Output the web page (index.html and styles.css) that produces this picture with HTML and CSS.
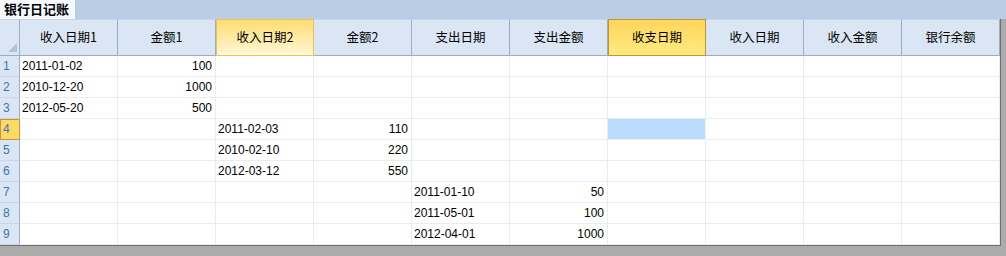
FILE: index.html
```html
<!DOCTYPE html>
<html lang="zh">
<head>
<meta charset="utf-8">
<title>银行日记账</title>
<link rel="stylesheet" href="styles.css">
</head>
<body>
<div class="window">
  <div class="tabstrip"><div class="tab">银行日记账</div></div>
  <div class="sheet">
    <div class="grid">
      <div class="hc corner"><span class="tri"></span></div>
      <div class="hc">收入日期1</div>
      <div class="hc">金额1</div>
      <div class="hc hover">收入日期2</div>
      <div class="hc">金额2</div>
      <div class="hc">支出日期</div>
      <div class="hc">支出金额</div>
      <div class="hc active">收支日期</div>
      <div class="hc">收入日期</div>
      <div class="hc">收入金额</div>
      <div class="hc">银行余额</div>

      <div class="rn">1</div><div class="c">2011-01-02</div><div class="c r">100</div><div class="c"></div><div class="c"></div><div class="c"></div><div class="c"></div><div class="c"></div><div class="c"></div><div class="c"></div><div class="c"></div>
      <div class="rn">2</div><div class="c">2010-12-20</div><div class="c r">1000</div><div class="c"></div><div class="c"></div><div class="c"></div><div class="c"></div><div class="c"></div><div class="c"></div><div class="c"></div><div class="c"></div>
      <div class="rn">3</div><div class="c">2012-05-20</div><div class="c r">500</div><div class="c"></div><div class="c"></div><div class="c"></div><div class="c"></div><div class="c"></div><div class="c"></div><div class="c"></div><div class="c"></div>
      <div class="rn cur">4</div><div class="c"></div><div class="c"></div><div class="c">2011-02-03</div><div class="c r">110</div><div class="c"></div><div class="c"></div><div class="c sel"></div><div class="c"></div><div class="c"></div><div class="c"></div>
      <div class="rn">5</div><div class="c"></div><div class="c"></div><div class="c">2010-02-10</div><div class="c r">220</div><div class="c"></div><div class="c"></div><div class="c"></div><div class="c"></div><div class="c"></div><div class="c"></div>
      <div class="rn">6</div><div class="c"></div><div class="c"></div><div class="c">2012-03-12</div><div class="c r">550</div><div class="c"></div><div class="c"></div><div class="c"></div><div class="c"></div><div class="c"></div><div class="c"></div>
      <div class="rn">7</div><div class="c"></div><div class="c"></div><div class="c"></div><div class="c"></div><div class="c">2011-01-10</div><div class="c r">50</div><div class="c"></div><div class="c"></div><div class="c"></div><div class="c"></div>
      <div class="rn">8</div><div class="c"></div><div class="c"></div><div class="c"></div><div class="c"></div><div class="c">2011-05-01</div><div class="c r">100</div><div class="c"></div><div class="c"></div><div class="c"></div><div class="c"></div>
      <div class="rn">9</div><div class="c"></div><div class="c"></div><div class="c"></div><div class="c"></div><div class="c">2012-04-01</div><div class="c r">1000</div><div class="c"></div><div class="c"></div><div class="c"></div><div class="c"></div>
    </div>
  </div>
</div>
</body>
</html>
```

FILE: styles.css
```css
* { box-sizing: border-box; }
html, body { margin: 0; padding: 0; }
body {
  width: 1006px;
  height: 256px;
  background: #ababab;
  font-family: "Liberation Sans", "Noto Sans CJK SC", sans-serif;
  font-size: 12px;
  color: #000;
  overflow: hidden;
}
.window { width: 1006px; }
.tabstrip {
  height: 19px;
  background: #b9cde5;
  display: flex;
  align-items: stretch;
}
.tab {
  width: 75px;
  background: #f5f8fc;
  font-family: "Noto Sans CJK SC", sans-serif;
  font-weight: bold;
  font-size: 13px;
  line-height: 18px;
  padding-left: 4px;
  white-space: nowrap;
}
.sheet {
  width: 1001px;
  border-right: 1px solid #6e6e6e;
  border-bottom: 1px solid #6e6e6e;
  background: #fff;
}
.grid {
  display: grid;
  grid-template-columns: 20px repeat(10, 98px);
  grid-template-rows: 37px repeat(9, 21px);
  width: 1000px;
}
.hc {
  background: #dbe6f4;
  border-top: 1px solid #c7d5e8;
  border-right: 1px solid #9eadc6;
  border-bottom: 1px solid #9eadc6;
  display: flex;
  align-items: center;
  justify-content: center;
  font-family: "Noto Sans CJK SC", sans-serif;
  font-size: 12.5px;
  line-height: 14px;
  padding-bottom: 1px;
}
.hc.corner {
  position: relative;
  background: #dbe6f4;
}
.tri {
  position: absolute;
  right: 2px;
  bottom: 3px;
  width: 0;
  height: 0;
  border-left: 9px solid transparent;
  border-bottom: 9px solid #b3c1d4;
}
.hc.hover {
  background: linear-gradient(#ffdd70, #fff7d6);
  border: 1px solid #e9c35a;
}
.hc.active {
  background: linear-gradient(#ffd65c, #ffea80);
  border: 1px solid #c39236;
}
.rn {
  background: #dbe6f4;
  border-right: 1px solid #9eadc6;
  border-bottom: 1px solid #c9d6e8;
  color: #3d74b5;
  padding-left: 3px;
  line-height: 20px;
}
.rn.cur {
  background: #ffd966;
  border: 1px solid #c9953c;
  line-height: 18px;
  padding-left: 2px;
}
.c {
  border-right: 1px solid #ececec;
  border-bottom: 1px solid #ececec;
  line-height: 20px;
  padding: 0 3px 0 2px;
  white-space: nowrap;
  overflow: hidden;
}
.c.r { text-align: right; }
.c.sel { background: #b8dbfe; border-right-color: #f2f2f2; border-bottom-color: #f2f2f2; }
```
